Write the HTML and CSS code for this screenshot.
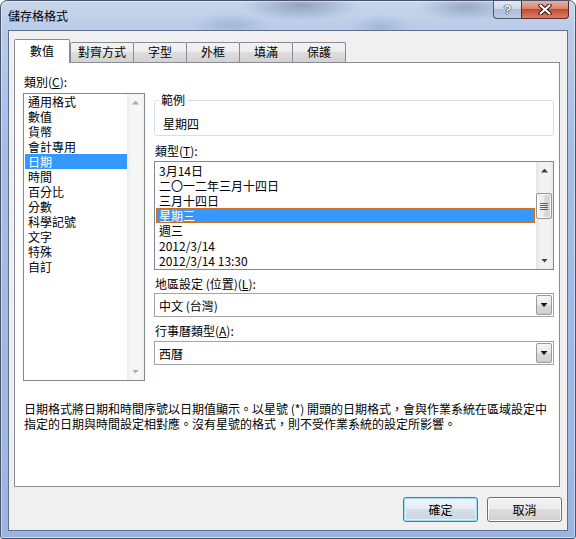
FILE: index.html
```html
<!DOCTYPE html>
<html lang="zh-Hant">
<head>
<meta charset="utf-8">
<title>儲存格格式</title>
<link rel="stylesheet" href="styles.css">
</head>
<body>
<div class="window">
  <div class="titlebar">
    <span class="title">儲存格格式</span>
    <div class="caption-buttons">
      <div class="cap-btn cap-help"><span class="help-glyph">?</span></div>
      <div class="cap-btn cap-close">
        <svg width="14" height="11" viewBox="0 0 14 11">
          <path d="M2.5 1.5 L11.5 9.5 M11.5 1.5 L2.5 9.5" stroke="#3b1410" stroke-width="4.2" stroke-linecap="round" fill="none"/>
          <path d="M2.5 1.5 L11.5 9.5 M11.5 1.5 L2.5 9.5" stroke="#ffffff" stroke-width="2.2" stroke-linecap="round" fill="none"/>
        </svg>
      </div>
    </div>
  </div>
  <div class="client">
    <div class="tabs">
      <div class="tab active">數值</div>
      <div class="tab">對齊方式</div>
      <div class="tab">字型</div>
      <div class="tab">外框</div>
      <div class="tab">填滿</div>
      <div class="tab">保護</div>
    </div>
    <div class="panel">
      <div class="columns">
        <div class="col-left">
          <div class="label">類別(<u>C</u>):</div>
          <div class="listbox category">
            <div class="items">
              <div class="item">通用格式</div>
              <div class="item">數值</div>
              <div class="item">貨幣</div>
              <div class="item">會計專用</div>
              <div class="item selected">日期</div>
              <div class="item">時間</div>
              <div class="item">百分比</div>
              <div class="item">分數</div>
              <div class="item">科學記號</div>
              <div class="item">文字</div>
              <div class="item">特殊</div>
              <div class="item">自訂</div>
            </div>
            <div class="scrollbar disabled">
              <div class="sb-btn"><span class="arrow up"></span></div>
              <div class="sb-track"></div>
              <div class="sb-btn"><span class="arrow down"></span></div>
            </div>
          </div>
        </div>
        <div class="col-right">
          <fieldset class="sample">
            <legend>範例</legend>
            <div class="sample-value">星期四</div>
          </fieldset>
          <div class="label gap-type">類型(<u>T</u>):</div>
          <div class="listbox types">
            <div class="items">
              <div class="item">3月14日</div>
              <div class="item">二〇一二年三月十四日</div>
              <div class="item">三月十四日</div>
              <div class="item selected focused">星期三</div>
              <div class="item">週三</div>
              <div class="item">2012/3/14</div>
              <div class="item">2012/3/14 13:30</div>
            </div>
            <div class="scrollbar">
              <div class="sb-btn"><span class="arrow up"></span></div>
              <div class="sb-track"><div class="thumb"><span class="grip"></span></div></div>
              <div class="sb-btn"><span class="arrow down"></span></div>
            </div>
          </div>
          <div class="label gap-combo">地區設定 (位置)(<u>L</u>):</div>
          <div class="combo"><span class="combo-text">中文 (台灣)</span><span class="drop"><span class="arrow down dark"></span></span></div>
          <div class="label gap-combo">行事曆類型(<u>A</u>):</div>
          <div class="combo combo-second"><span class="combo-text">西曆</span><span class="drop"><span class="arrow down dark"></span></span></div>
        </div>
      </div>
      <p class="description">日期格式將日期和時間序號以日期值顯示。以星號 (*) 開頭的日期格式，會與作業系統在區域設定中<br>指定的日期與時間設定相對應。沒有星號的格式，則不受作業系統的設定所影響。</p>
    </div>
    <div class="buttons">
      <button class="btn default">確定</button>
      <button class="btn">取消</button>
    </div>
  </div>
</div>
</body>
</html>
```
FILE: styles.css
```css
* { box-sizing: border-box; }
html, body { margin: 0; padding: 0; }
body {
  width: 576px;
  height: 539px;
  overflow: hidden;
  background: #ffffff;
  font-family: "Noto Sans CJK TC", "Noto Sans", sans-serif;
  font-size: 12px;
  line-height: 15px;
  color: #000;
}

.window {
  width: 576px;
  height: 539px;
  display: flex;
  flex-direction: column;
  border: 1px solid #47546b;
  border-radius: 7px 7px 3px 3px;
  overflow: hidden;
  background:
    radial-gradient(ellipse 60px 16px at 300px 4px, rgba(60, 82, 125, .38), rgba(60, 82, 125, 0)),
    radial-gradient(ellipse 40px 12px at 230px 24px, rgba(60, 82, 125, .18), rgba(60, 82, 125, 0)),
    radial-gradient(ellipse 48px 14px at 465px 6px, rgba(60, 82, 125, .32), rgba(60, 82, 125, 0)),
    radial-gradient(ellipse 30px 12px at 380px 26px, rgba(60, 82, 125, .18), rgba(60, 82, 125, 0)),
    linear-gradient(180deg, #c9d7ec 0, #b9cbe8 28px, #a6bee5 140px, #9cb5e0 100%);
  box-shadow: inset 0 0 0 1px rgba(255, 255, 255, .45);
}

.titlebar {
  height: 29px;
  flex: none;
  display: flex;
  align-items: flex-start;
  padding-left: 7px;
}
.title { margin-top: 7px; line-height: 15px; }
.caption-buttons { margin-left: auto; margin-right: 6px; display: flex; }
.cap-btn {
  height: 18px;
  display: flex;
  align-items: center;
  justify-content: center;
  border: 1px solid #4d5a70;
  border-top: none;
}
.cap-help {
  width: 28px;
  border-right: none;
  border-radius: 0 0 0 4px;
  background: linear-gradient(#e4eaf3, #cdd7e6 45%, #b0bfd6 50%, #bccae0);
}
.help-glyph {
  font-family: "Liberation Sans", sans-serif;
  font-weight: bold;
  font-size: 13px;
  line-height: 13px;
  color: #fff;
  text-shadow: 0 0 1px #1c2a44, 0 0 1px #1c2a44, 0 0 1px #1c2a44;
}
.cap-close {
  width: 48px;
  border-color: #5e2a22;
  border-radius: 0 0 4px 0;
  background: linear-gradient(#eab0a2, #d88470 45%, #c34a30 50%, #d6806c);
}
.cap-close svg { display: block; }

.client {
  flex: 1;
  margin: 0 7px 7px;
  border: 1px solid #5f708e;
  background: #f0f0f0;
  display: flex;
  flex-direction: column;
  padding: 8px 0 0 5px;
}

.tabs {
  display: flex;
  align-items: flex-end;
  height: 23px;
  position: relative;
  z-index: 1;
}
.tab {
  height: 20px;
  min-width: 54px;
  padding: 0 7px;
  margin-left: -1px;
  border: 1px solid #898c95;
  border-bottom: none;
  border-radius: 2px 2px 0 0;
  background: linear-gradient(#f3f3f3, #ebebeb 50%, #dddddd 50%, #d2d2d2);
  text-align: center;
  line-height: 18px;
  white-space: nowrap;
}
.tab.active {
  height: 24px;
  min-width: 56px;
  margin-left: 0;
  margin-bottom: -1px;
  background: #ffffff;
  line-height: 22px;
}
.tab.active + .tab { margin-left: 0; }

.panel {
  height: 425px;
  margin-right: 7px;
  border: 1px solid #898c95;
  background: #ffffff;
  padding: 11px 0 0 8px;
}

.columns {
  display: grid;
  grid-template-columns: 122px 400px;
  column-gap: 9px;
  align-items: start;
}

.label {
  height: 15px;
  line-height: 15px;
  padding-left: 1px;
  white-space: nowrap;
}
.gap-type { margin-top: 7px; }
.gap-combo { margin-top: 6px; }

.listbox {
  display: flex;
  border: 1px solid #828790;
  background: #ffffff;
}
.listbox .items { flex: 1; min-width: 0; }
.category { margin-top: 4px; height: 288px; }
.types { margin-top: 3px; height: 109px; }
.types .items { padding-top: 1px; }

.item {
  height: 15px;
  line-height: 15px;
  margin: 0 1px 0 1px;
  padding-left: 3px;
  white-space: nowrap;
}
.category .item { margin-right: 0; }
.item.selected { background: #3399ff; color: #ffffff; }
.item.focused { outline: 1px dotted #c8691c; outline-offset: -1px; }

.scrollbar {
  width: 17px;
  flex: none;
  display: flex;
  flex-direction: column;
  background: linear-gradient(90deg, #e4e4e4, #f1f1f1 25%, #f3f3f3 75%, #e9e9e9);
}
.scrollbar.disabled { background: linear-gradient(90deg, #ececec, #f6f6f6 25%, #f7f7f7 75%, #efefef); }
.sb-btn {
  height: 17px;
  flex: none;
  display: flex;
  align-items: center;
  justify-content: center;
}
.sb-track { flex: 1; }

.arrow { display: block; width: 7px; height: 4px; background: #404040; }
.arrow.up { clip-path: polygon(50% 0, 100% 100%, 0 100%); }
.arrow.down { clip-path: polygon(0 0, 100% 0, 50% 100%); }
.disabled .arrow { background: #a9a9a9; }
.arrow.dark { background: #111111; }

.thumb {
  margin: 14px 1px 0 0;
  height: 26px;
  border: 1px solid #959595;
  border-radius: 2px;
  background: linear-gradient(90deg, #f6f6f6, #ebebeb 50%, #dcdcdc 50%, #d2d2d2);
  box-shadow: inset 0 0 0 1px rgba(255, 255, 255, .7);
  display: flex;
  align-items: center;
  justify-content: center;
}
.grip {
  width: 8px;
  height: 7px;
  background: repeating-linear-gradient(180deg, #5e5e5e 0 1px, transparent 1px 2px);
}

.sample {
  margin: 19px 0 0 0;
  padding: 9px 0 4px 8px;
  border: 1px solid #d5dfe5;
  border-radius: 3px;
  min-width: 0;
}
.sample legend {
  padding: 0 2px;
  margin-left: -4px;
  line-height: 14px;
}
.sample-value { line-height: 15px; height: 15px; }

.combo {
  margin-top: 2px;
  height: 24px;
  border: 1px solid #a4a4a4;
  background: #ffffff;
  display: flex;
  align-items: center;
  padding-left: 4px;
}
.combo-second { margin-top: 3px; }
.combo-text { line-height: 15px; white-space: nowrap; }
.drop {
  margin-left: auto;
  margin-right: 1px;
  width: 16px;
  height: 20px;
  border: 1px solid #9c9c9c;
  border-radius: 2px;
  background: linear-gradient(#f5f5f5, #e9e9e9 50%, #dadada 50%, #cdcdcd);
  display: flex;
  align-items: center;
  justify-content: center;
}

.description {
  margin: 20px 0 0 1px;
  line-height: 15px;
  white-space: nowrap;
}

.buttons {
  display: flex;
  justify-content: flex-end;
  gap: 9px;
  margin-top: 10px;
  padding-right: 5px;
}
.btn {
  width: 75px;
  height: 25px;
  padding: 0;
  font: inherit;
  font-size: 12px;
  line-height: 15px;
  color: #000;
  border: 1px solid #707070;
  border-radius: 3px;
  background: linear-gradient(#f2f2f2, #ebebeb 50%, #dddddd 50%, #cfcfcf);
  box-shadow: inset 0 0 0 1px #fbfbfb;
}
.btn.default {
  border-color: #3c7fb1;
  background: linear-gradient(#eef5fa, #e4edf3 50%, #d5dfe6 50%, #cad6df);
  box-shadow: inset 0 0 0 1px #9fdcf8, inset 0 0 0 2px #dff2fb;
}
```
